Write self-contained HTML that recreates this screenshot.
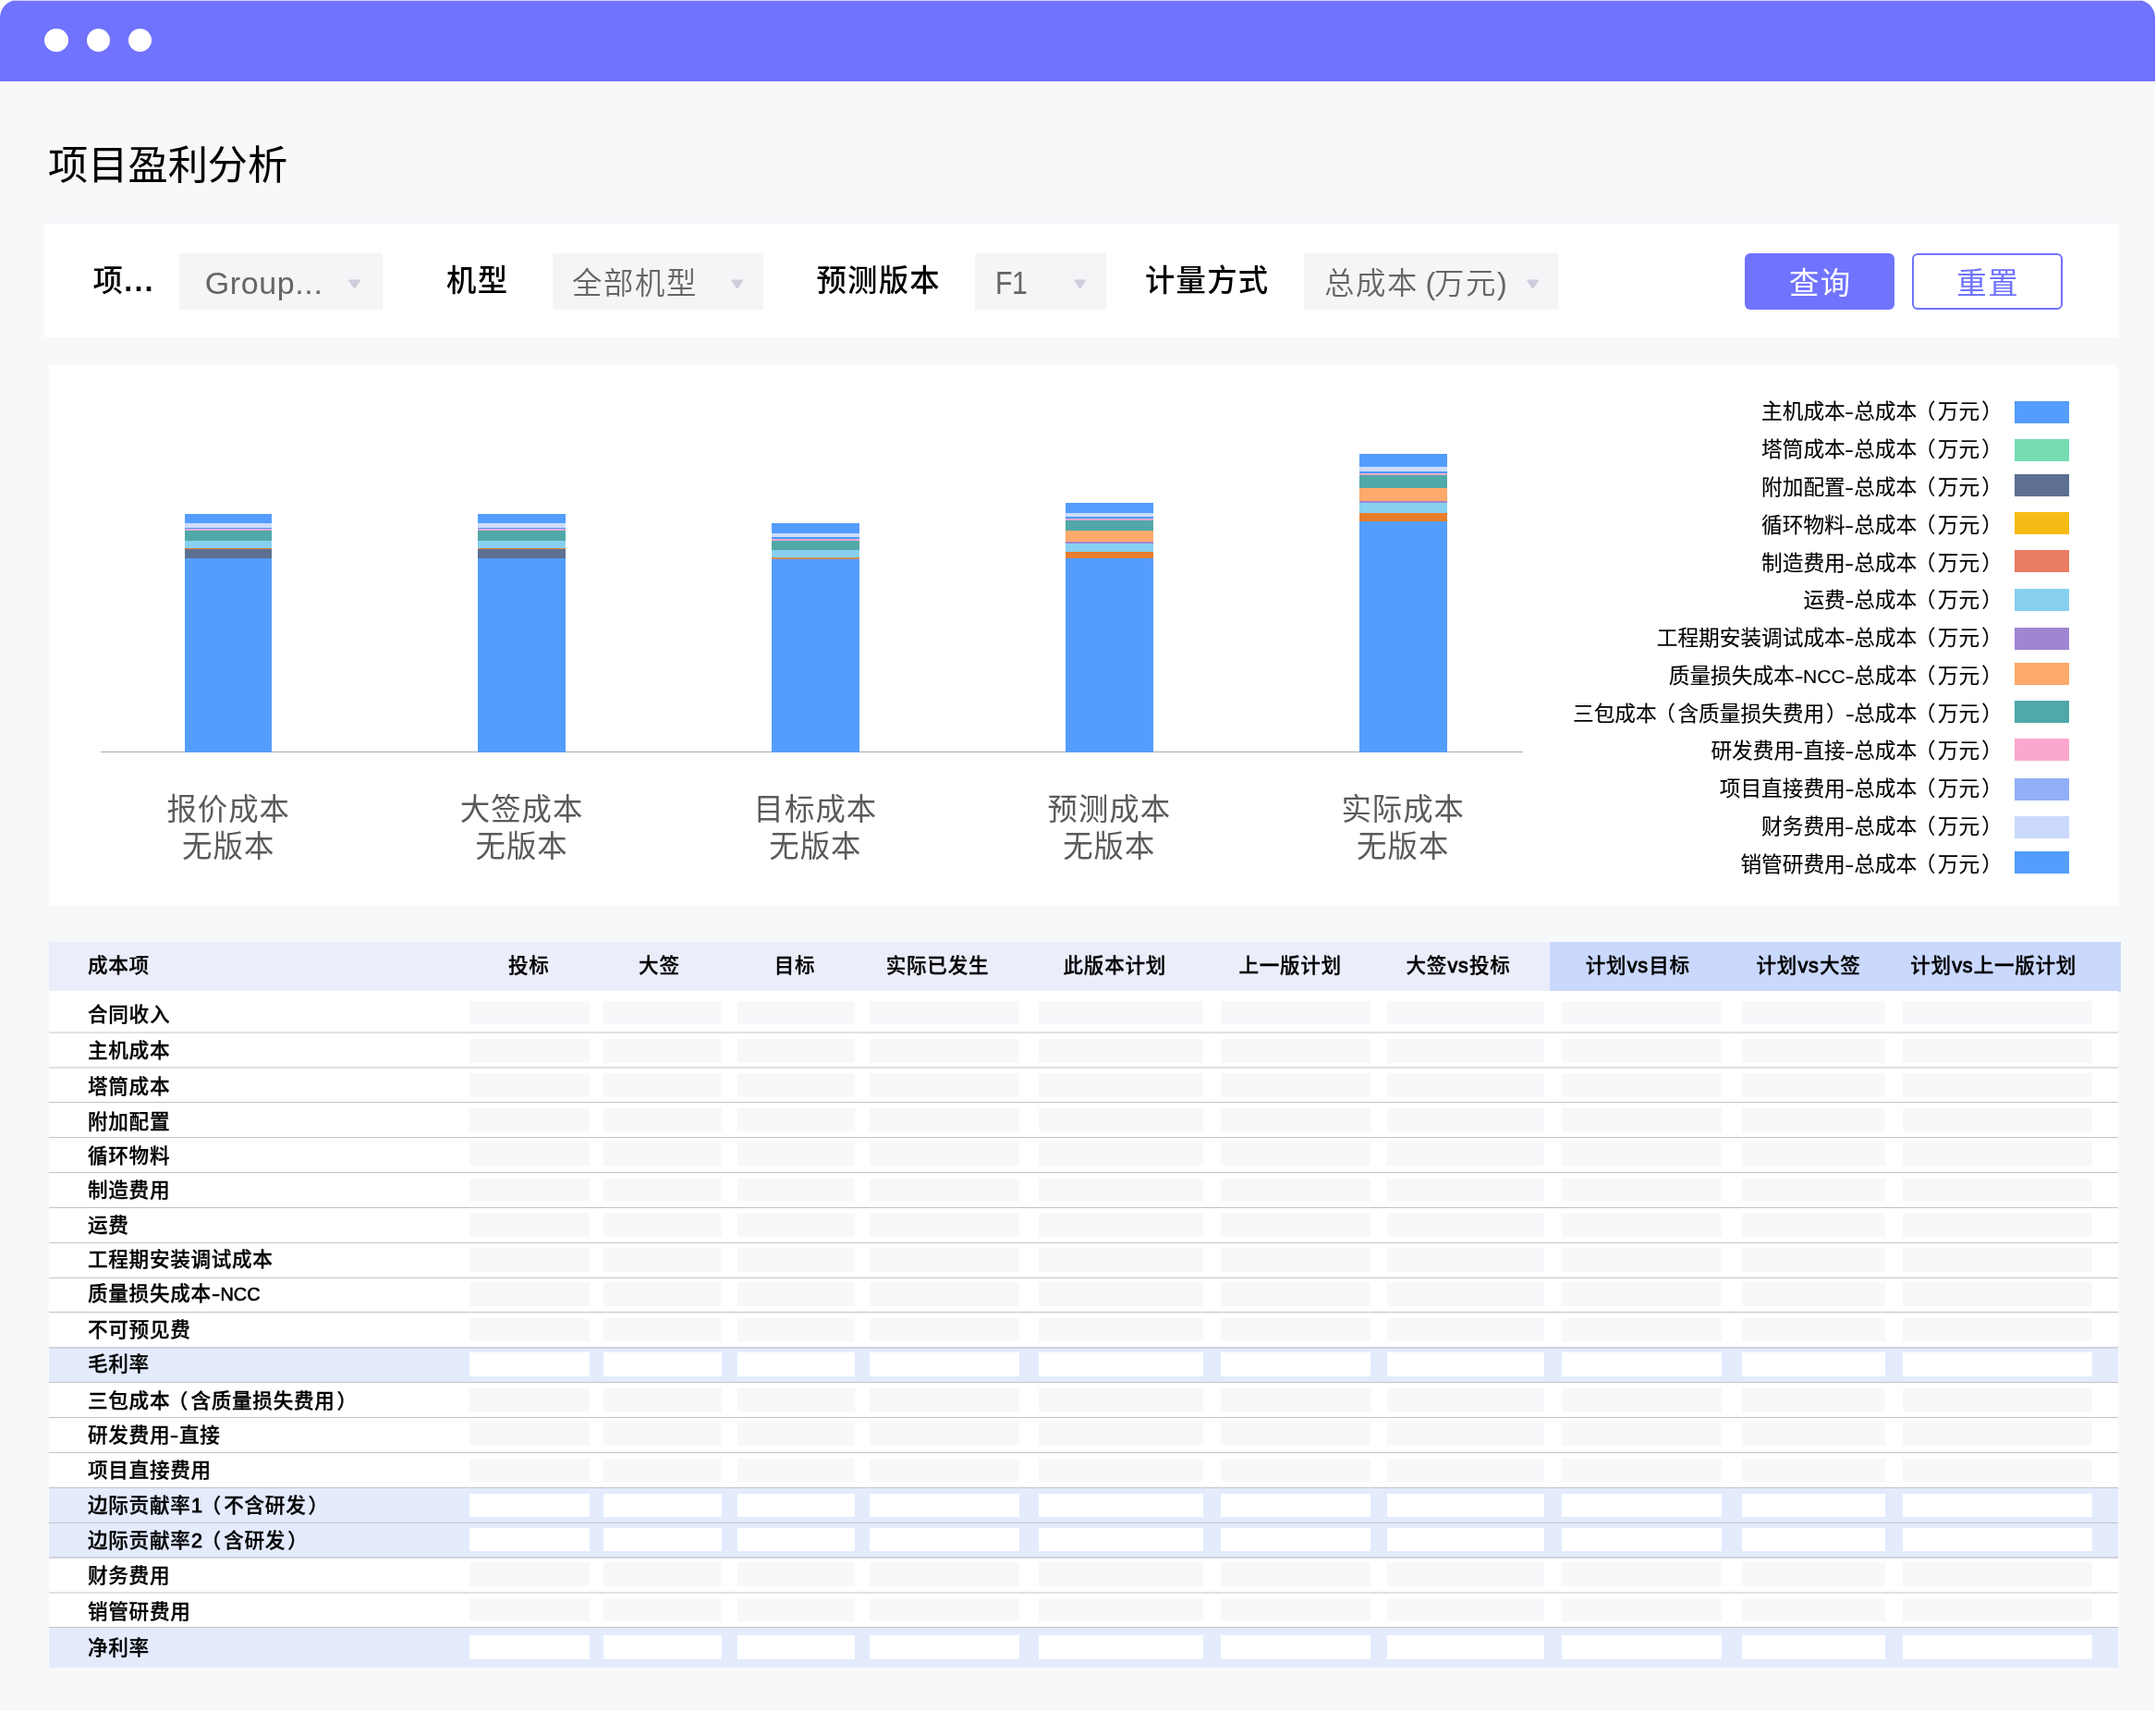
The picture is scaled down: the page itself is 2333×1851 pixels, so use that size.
<!DOCTYPE html>
<html lang="zh-CN"><head><meta charset="utf-8"><title>项目盈利分析</title>
<style>
html,body{margin:0;padding:0;background:#fff}
body{width:2333px;height:1851px;overflow:hidden;font-family:"Liberation Sans", "Noto Sans CJK SC", sans-serif}
.win{position:absolute;left:0;top:0;width:2332px;height:1851px;background:#f7f8fa;border-radius:19px 19px 0 0;overflow:hidden}
.win div,.win svg{position:absolute}
.hdr{left:0;top:0;width:2332px;height:87.8px;background:#7073fd}
.dot{width:25.1px;height:25.1px;border-radius:50%;background:#fff}
.tl{left:0;top:0;width:2332px;height:1851px;will-change:transform}
.t{white-space:nowrap}
.m{-webkit-text-stroke:0.3px #000}
.pl{position:relative;left:-2.4px}
.pr{position:relative;left:2px}
.h{display:inline-block;transform:scaleX(1.34);margin:0 0.9px}
.l{font-size:0.93em}
.g{-webkit-text-stroke:0.12px #000}
.m .l{font-size:1.0em;-webkit-text-stroke:0.9px #000;margin:0 0.4px}
.m .u{font-size:.92em;-webkit-text-stroke:0.6px #000;margin:0;letter-spacing:0}
.btn{box-sizing:border-box;border-radius:6px}
.b1{background:#7073fd;color:#fff}
.b2{background:#fff;border:2px solid #7073fd}
</style></head><body>
<div class="win">
<div class="hdr"></div>
<div style="left:0;top:0;width:2332px;height:1px;background:#fff;opacity:.7"></div>
<div class="dot" style="left:48.45px;top:30.60px"></div>
<div class="dot" style="left:93.65px;top:30.60px"></div>
<div class="dot" style="left:138.95px;top:30.60px"></div>
<div style="left:47.0px;top:243.2px;width:2245.0px;height:121.8px;background:#fff;"></div>
<div style="left:194.0px;top:274.4px;width:219.7px;height:60.8px;background:#f5f5f8;"></div>
<div style="left:598.0px;top:274.4px;width:228.2px;height:60.8px;background:#f5f5f8;"></div>
<div style="left:1055.0px;top:274.4px;width:141.7px;height:60.8px;background:#f5f5f8;"></div>
<div style="left:1411.0px;top:274.4px;width:274.6px;height:60.8px;background:#f5f5f8;"></div>
<svg class="a" style="left:376.9px;top:301.8px" width="13.4" height="10.4" viewBox="0 0 14 11"><path d="M1.2 0.6h11.6a0.9 0.9 0 0 1 0.75 1.4l-5.7 8.2a1 1 0 0 1-1.7 0L0.45 2A0.9 0.9 0 0 1 1.2 0.6z" fill="#cdcddc"/></svg>
<svg class="a" style="left:791.2px;top:301.8px" width="13.4" height="10.4" viewBox="0 0 14 11"><path d="M1.2 0.6h11.6a0.9 0.9 0 0 1 0.75 1.4l-5.7 8.2a1 1 0 0 1-1.7 0L0.45 2A0.9 0.9 0 0 1 1.2 0.6z" fill="#cdcddc"/></svg>
<svg class="a" style="left:1161.8px;top:301.8px" width="13.4" height="10.4" viewBox="0 0 14 11"><path d="M1.2 0.6h11.6a0.9 0.9 0 0 1 0.75 1.4l-5.7 8.2a1 1 0 0 1-1.7 0L0.45 2A0.9 0.9 0 0 1 1.2 0.6z" fill="#cdcddc"/></svg>
<svg class="a" style="left:1651.6px;top:301.8px" width="13.4" height="10.4" viewBox="0 0 14 11"><path d="M1.2 0.6h11.6a0.9 0.9 0 0 1 0.75 1.4l-5.7 8.2a1 1 0 0 1-1.7 0L0.45 2A0.9 0.9 0 0 1 1.2 0.6z" fill="#cdcddc"/></svg>
<div class="btn b1" style="left:1888.2px;top:274.4px;width:162.1px;height:60.8px"></div>
<div class="btn b2" style="left:2069px;top:274.4px;width:163.2px;height:60.8px"></div>
<div style="left:53.0px;top:395.0px;width:2239.0px;height:585.0px;background:#fff;"></div>
<div style="left:109.4px;top:813.0px;width:1538.9px;height:1.0px;background:#a9a9a9;"></div>
<div style="left:200px;top:556px;width:94px;height:258px;background:linear-gradient(180deg,#549dfd 0.00px 9.90px,#cddcfc 9.90px 14.90px,#4d9bfc 14.90px 16.00px,#fba7ce 16.00px 18.00px,#50a8a8 18.00px 28.70px,#87d0ef 28.70px 36.80px,#e67e2d 36.80px 38.20px,#5d7091 38.20px 48.20px,#549dfd 48.20px 258.00px)"></div>
<div style="left:517px;top:556px;width:95px;height:258px;background:linear-gradient(180deg,#549dfd 0.00px 9.90px,#cddcfc 9.90px 14.90px,#4d9bfc 14.90px 16.00px,#fba7ce 16.00px 18.00px,#50a8a8 18.00px 28.70px,#87d0ef 28.70px 36.80px,#e67e2d 36.80px 38.20px,#5d7091 38.20px 48.20px,#549dfd 48.20px 258.00px)"></div>
<div style="left:835px;top:566px;width:95px;height:248px;background:linear-gradient(180deg,#549dfd 0.00px 10.90px,#cddcfc 10.90px 15.00px,#4d9bfc 15.00px 16.75px,#fba7ce 16.75px 18.90px,#50a8a8 18.90px 29.00px,#87d0ef 29.00px 36.90px,#cf8a55 36.90px 38.70px,#549dfd 38.70px 248.00px)"></div>
<div style="left:1153px;top:544px;width:95px;height:270px;background:linear-gradient(180deg,#549dfd 0.00px 11.50px,#cddcfc 11.50px 15.25px,#4d9bfc 15.25px 17.00px,#fba7ce 17.00px 18.95px,#50a8a8 18.95px 30.30px,#fda96b 30.30px 42.00px,#a085d3 42.00px 43.80px,#87d0ef 43.80px 53.00px,#e67e2d 53.00px 60.40px,#549dfd 60.40px 270.00px)"></div>
<div style="left:1471px;top:491px;width:95px;height:323px;background:linear-gradient(180deg,#549dfd 0.00px 14.10px,#cddcfc 14.10px 19.00px,#4d9bfc 19.00px 21.05px,#fba7ce 21.05px 23.50px,#50a8a8 23.50px 37.00px,#fda96b 37.00px 51.00px,#a085d3 51.00px 52.90px,#87d0ef 52.90px 63.90px,#e67e2d 63.90px 72.90px,#549dfd 72.90px 323.00px)"></div>
<div style="left:2180.0px;top:434.1px;width:59.2px;height:23.8px;background:#549dfd;"></div>
<div style="left:2180.0px;top:475.0px;width:59.2px;height:23.8px;background:#76dcb1;"></div>
<div style="left:2180.0px;top:513.4px;width:59.2px;height:23.8px;background:#5d7091;"></div>
<div style="left:2180.0px;top:554.1px;width:59.2px;height:23.8px;background:#f6bc16;"></div>
<div style="left:2180.0px;top:595.1px;width:59.2px;height:23.8px;background:#eb7c64;"></div>
<div style="left:2180.0px;top:637.2px;width:59.2px;height:23.8px;background:#87d0ef;"></div>
<div style="left:2180.0px;top:679.4px;width:59.2px;height:23.8px;background:#a085d3;"></div>
<div style="left:2180.0px;top:717.4px;width:59.2px;height:23.8px;background:#fda96b;"></div>
<div style="left:2180.0px;top:758.3px;width:59.2px;height:23.8px;background:#50a8a8;"></div>
<div style="left:2180.0px;top:799.2px;width:59.2px;height:23.8px;background:#fba7ce;"></div>
<div style="left:2180.0px;top:842.3px;width:59.2px;height:23.8px;background:#91b0f8;"></div>
<div style="left:2180.0px;top:883.2px;width:59.2px;height:23.8px;background:#cbd9fd;"></div>
<div style="left:2180.0px;top:921.3px;width:59.2px;height:23.8px;background:#549dfd;"></div>
<div style="left:53.2px;top:1018.5px;width:2241.8px;height:54.0px;background:#ebedfa;"></div>
<div style="left:1676.6px;top:1018.5px;width:618.4px;height:54.0px;background:#c9d8fc;"></div>
<div style="left:53.2px;top:1072.0px;width:2238.8px;height:732.0px;background:#fff;"></div>
<div style="left:53.2px;top:1457.0px;width:2238.8px;height:38.0px;background:#e3ebfd;"></div>
<div style="left:53.2px;top:1609.0px;width:2238.8px;height:38.0px;background:#e3ebfd;"></div>
<div style="left:53.2px;top:1647.0px;width:2238.8px;height:37.0px;background:#e3ebfd;"></div>
<div style="left:53.2px;top:1760.0px;width:2238.8px;height:44.0px;background:#e3ebfd;"></div>
<div style="left:53.2px;top:1116.0px;width:2238.8px;height:2.0px;background:#e1e1e3;"></div>
<div style="left:53.2px;top:1154.0px;width:2238.8px;height:2.0px;background:#e1e1e3;"></div>
<div style="left:53.2px;top:1192.0px;width:2238.8px;height:1.0px;background:#c3c3c6;"></div>
<div style="left:53.2px;top:1230.0px;width:2238.8px;height:1.0px;background:#c3c3c6;"></div>
<div style="left:53.2px;top:1268.0px;width:2238.8px;height:1.0px;background:#c3c3c6;"></div>
<div style="left:53.2px;top:1306.0px;width:2238.8px;height:1.0px;background:#c3c3c6;"></div>
<div style="left:53.2px;top:1344.0px;width:2238.8px;height:1.0px;background:#c3c3c6;"></div>
<div style="left:53.2px;top:1382.0px;width:2238.8px;height:1.0px;background:#c3c3c6;"></div>
<div style="left:53.2px;top:1419.0px;width:2238.8px;height:1.0px;background:#c3c3c6;"></div>
<div style="left:53.2px;top:1457.0px;width:2238.8px;height:2.0px;background:#cfd3de;"></div>
<div style="left:53.2px;top:1495.0px;width:2238.8px;height:1.0px;background:#c3c3c6;"></div>
<div style="left:53.2px;top:1533.0px;width:2238.8px;height:1.0px;background:#c3c3c6;"></div>
<div style="left:53.2px;top:1571.0px;width:2238.8px;height:1.0px;background:#c3c3c6;"></div>
<div style="left:53.2px;top:1609.0px;width:2238.8px;height:1.0px;background:#c3c3c6;"></div>
<div style="left:53.2px;top:1647.0px;width:2238.8px;height:1.0px;background:#c3c3c6;"></div>
<div style="left:53.2px;top:1684.0px;width:2238.8px;height:2.0px;background:#cfd3de;"></div>
<div style="left:53.2px;top:1722.0px;width:2238.8px;height:2.0px;background:#e1e1e3;"></div>
<div style="left:53.2px;top:1760.0px;width:2238.8px;height:1.0px;background:#c3c3c6;"></div>
<div style="left:508.2px;top:1082.7px;width:129.6px;height:25.4px;background:#f7f8fa;"></div>
<div style="left:653.1px;top:1082.7px;width:127.7px;height:25.4px;background:#f7f8fa;"></div>
<div style="left:797.9px;top:1082.7px;width:127.2px;height:25.4px;background:#f7f8fa;"></div>
<div style="left:940.9px;top:1082.7px;width:161.7px;height:25.4px;background:#f7f8fa;"></div>
<div style="left:1124.3px;top:1082.7px;width:177.6px;height:25.4px;background:#f7f8fa;"></div>
<div style="left:1321.0px;top:1082.7px;width:161.7px;height:25.4px;background:#f7f8fa;"></div>
<div style="left:1500.8px;top:1082.7px;width:170.4px;height:25.4px;background:#f7f8fa;"></div>
<div style="left:1689.6px;top:1082.7px;width:173.6px;height:25.4px;background:#f7f8fa;"></div>
<div style="left:1884.6px;top:1082.7px;width:155.4px;height:25.4px;background:#f7f8fa;"></div>
<div style="left:2059.0px;top:1082.7px;width:204.6px;height:25.4px;background:#f7f8fa;"></div>
<div style="left:508.2px;top:1124.3px;width:129.6px;height:25.4px;background:#f7f8fa;"></div>
<div style="left:653.1px;top:1124.3px;width:127.7px;height:25.4px;background:#f7f8fa;"></div>
<div style="left:797.9px;top:1124.3px;width:127.2px;height:25.4px;background:#f7f8fa;"></div>
<div style="left:940.9px;top:1124.3px;width:161.7px;height:25.4px;background:#f7f8fa;"></div>
<div style="left:1124.3px;top:1124.3px;width:177.6px;height:25.4px;background:#f7f8fa;"></div>
<div style="left:1321.0px;top:1124.3px;width:161.7px;height:25.4px;background:#f7f8fa;"></div>
<div style="left:1500.8px;top:1124.3px;width:170.4px;height:25.4px;background:#f7f8fa;"></div>
<div style="left:1689.6px;top:1124.3px;width:173.6px;height:25.4px;background:#f7f8fa;"></div>
<div style="left:1884.6px;top:1124.3px;width:155.4px;height:25.4px;background:#f7f8fa;"></div>
<div style="left:2059.0px;top:1124.3px;width:204.6px;height:25.4px;background:#f7f8fa;"></div>
<div style="left:508.2px;top:1161.3px;width:129.6px;height:25.4px;background:#f7f8fa;"></div>
<div style="left:653.1px;top:1161.3px;width:127.7px;height:25.4px;background:#f7f8fa;"></div>
<div style="left:797.9px;top:1161.3px;width:127.2px;height:25.4px;background:#f7f8fa;"></div>
<div style="left:940.9px;top:1161.3px;width:161.7px;height:25.4px;background:#f7f8fa;"></div>
<div style="left:1124.3px;top:1161.3px;width:177.6px;height:25.4px;background:#f7f8fa;"></div>
<div style="left:1321.0px;top:1161.3px;width:161.7px;height:25.4px;background:#f7f8fa;"></div>
<div style="left:1500.8px;top:1161.3px;width:170.4px;height:25.4px;background:#f7f8fa;"></div>
<div style="left:1689.6px;top:1161.3px;width:173.6px;height:25.4px;background:#f7f8fa;"></div>
<div style="left:1884.6px;top:1161.3px;width:155.4px;height:25.4px;background:#f7f8fa;"></div>
<div style="left:2059.0px;top:1161.3px;width:204.6px;height:25.4px;background:#f7f8fa;"></div>
<div style="left:508.2px;top:1198.9px;width:129.6px;height:25.4px;background:#f7f8fa;"></div>
<div style="left:653.1px;top:1198.9px;width:127.7px;height:25.4px;background:#f7f8fa;"></div>
<div style="left:797.9px;top:1198.9px;width:127.2px;height:25.4px;background:#f7f8fa;"></div>
<div style="left:940.9px;top:1198.9px;width:161.7px;height:25.4px;background:#f7f8fa;"></div>
<div style="left:1124.3px;top:1198.9px;width:177.6px;height:25.4px;background:#f7f8fa;"></div>
<div style="left:1321.0px;top:1198.9px;width:161.7px;height:25.4px;background:#f7f8fa;"></div>
<div style="left:1500.8px;top:1198.9px;width:170.4px;height:25.4px;background:#f7f8fa;"></div>
<div style="left:1689.6px;top:1198.9px;width:173.6px;height:25.4px;background:#f7f8fa;"></div>
<div style="left:1884.6px;top:1198.9px;width:155.4px;height:25.4px;background:#f7f8fa;"></div>
<div style="left:2059.0px;top:1198.9px;width:204.6px;height:25.4px;background:#f7f8fa;"></div>
<div style="left:508.2px;top:1235.4px;width:129.6px;height:25.4px;background:#f7f8fa;"></div>
<div style="left:653.1px;top:1235.4px;width:127.7px;height:25.4px;background:#f7f8fa;"></div>
<div style="left:797.9px;top:1235.4px;width:127.2px;height:25.4px;background:#f7f8fa;"></div>
<div style="left:940.9px;top:1235.4px;width:161.7px;height:25.4px;background:#f7f8fa;"></div>
<div style="left:1124.3px;top:1235.4px;width:177.6px;height:25.4px;background:#f7f8fa;"></div>
<div style="left:1321.0px;top:1235.4px;width:161.7px;height:25.4px;background:#f7f8fa;"></div>
<div style="left:1500.8px;top:1235.4px;width:170.4px;height:25.4px;background:#f7f8fa;"></div>
<div style="left:1689.6px;top:1235.4px;width:173.6px;height:25.4px;background:#f7f8fa;"></div>
<div style="left:1884.6px;top:1235.4px;width:155.4px;height:25.4px;background:#f7f8fa;"></div>
<div style="left:2059.0px;top:1235.4px;width:204.6px;height:25.4px;background:#f7f8fa;"></div>
<div style="left:508.2px;top:1275.0px;width:129.6px;height:25.4px;background:#f7f8fa;"></div>
<div style="left:653.1px;top:1275.0px;width:127.7px;height:25.4px;background:#f7f8fa;"></div>
<div style="left:797.9px;top:1275.0px;width:127.2px;height:25.4px;background:#f7f8fa;"></div>
<div style="left:940.9px;top:1275.0px;width:161.7px;height:25.4px;background:#f7f8fa;"></div>
<div style="left:1124.3px;top:1275.0px;width:177.6px;height:25.4px;background:#f7f8fa;"></div>
<div style="left:1321.0px;top:1275.0px;width:161.7px;height:25.4px;background:#f7f8fa;"></div>
<div style="left:1500.8px;top:1275.0px;width:170.4px;height:25.4px;background:#f7f8fa;"></div>
<div style="left:1689.6px;top:1275.0px;width:173.6px;height:25.4px;background:#f7f8fa;"></div>
<div style="left:1884.6px;top:1275.0px;width:155.4px;height:25.4px;background:#f7f8fa;"></div>
<div style="left:2059.0px;top:1275.0px;width:204.6px;height:25.4px;background:#f7f8fa;"></div>
<div style="left:508.2px;top:1313.0px;width:129.6px;height:25.4px;background:#f7f8fa;"></div>
<div style="left:653.1px;top:1313.0px;width:127.7px;height:25.4px;background:#f7f8fa;"></div>
<div style="left:797.9px;top:1313.0px;width:127.2px;height:25.4px;background:#f7f8fa;"></div>
<div style="left:940.9px;top:1313.0px;width:161.7px;height:25.4px;background:#f7f8fa;"></div>
<div style="left:1124.3px;top:1313.0px;width:177.6px;height:25.4px;background:#f7f8fa;"></div>
<div style="left:1321.0px;top:1313.0px;width:161.7px;height:25.4px;background:#f7f8fa;"></div>
<div style="left:1500.8px;top:1313.0px;width:170.4px;height:25.4px;background:#f7f8fa;"></div>
<div style="left:1689.6px;top:1313.0px;width:173.6px;height:25.4px;background:#f7f8fa;"></div>
<div style="left:1884.6px;top:1313.0px;width:155.4px;height:25.4px;background:#f7f8fa;"></div>
<div style="left:2059.0px;top:1313.0px;width:204.6px;height:25.4px;background:#f7f8fa;"></div>
<div style="left:508.2px;top:1350.2px;width:129.6px;height:25.4px;background:#f7f8fa;"></div>
<div style="left:653.1px;top:1350.2px;width:127.7px;height:25.4px;background:#f7f8fa;"></div>
<div style="left:797.9px;top:1350.2px;width:127.2px;height:25.4px;background:#f7f8fa;"></div>
<div style="left:940.9px;top:1350.2px;width:161.7px;height:25.4px;background:#f7f8fa;"></div>
<div style="left:1124.3px;top:1350.2px;width:177.6px;height:25.4px;background:#f7f8fa;"></div>
<div style="left:1321.0px;top:1350.2px;width:161.7px;height:25.4px;background:#f7f8fa;"></div>
<div style="left:1500.8px;top:1350.2px;width:170.4px;height:25.4px;background:#f7f8fa;"></div>
<div style="left:1689.6px;top:1350.2px;width:173.6px;height:25.4px;background:#f7f8fa;"></div>
<div style="left:1884.6px;top:1350.2px;width:155.4px;height:25.4px;background:#f7f8fa;"></div>
<div style="left:2059.0px;top:1350.2px;width:204.6px;height:25.4px;background:#f7f8fa;"></div>
<div style="left:508.2px;top:1387.2px;width:129.6px;height:25.4px;background:#f7f8fa;"></div>
<div style="left:653.1px;top:1387.2px;width:127.7px;height:25.4px;background:#f7f8fa;"></div>
<div style="left:797.9px;top:1387.2px;width:127.2px;height:25.4px;background:#f7f8fa;"></div>
<div style="left:940.9px;top:1387.2px;width:161.7px;height:25.4px;background:#f7f8fa;"></div>
<div style="left:1124.3px;top:1387.2px;width:177.6px;height:25.4px;background:#f7f8fa;"></div>
<div style="left:1321.0px;top:1387.2px;width:161.7px;height:25.4px;background:#f7f8fa;"></div>
<div style="left:1500.8px;top:1387.2px;width:170.4px;height:25.4px;background:#f7f8fa;"></div>
<div style="left:1689.6px;top:1387.2px;width:173.6px;height:25.4px;background:#f7f8fa;"></div>
<div style="left:1884.6px;top:1387.2px;width:155.4px;height:25.4px;background:#f7f8fa;"></div>
<div style="left:2059.0px;top:1387.2px;width:204.6px;height:25.4px;background:#f7f8fa;"></div>
<div style="left:508.2px;top:1425.5px;width:129.6px;height:25.4px;background:#f7f8fa;"></div>
<div style="left:653.1px;top:1425.5px;width:127.7px;height:25.4px;background:#f7f8fa;"></div>
<div style="left:797.9px;top:1425.5px;width:127.2px;height:25.4px;background:#f7f8fa;"></div>
<div style="left:940.9px;top:1425.5px;width:161.7px;height:25.4px;background:#f7f8fa;"></div>
<div style="left:1124.3px;top:1425.5px;width:177.6px;height:25.4px;background:#f7f8fa;"></div>
<div style="left:1321.0px;top:1425.5px;width:161.7px;height:25.4px;background:#f7f8fa;"></div>
<div style="left:1500.8px;top:1425.5px;width:170.4px;height:25.4px;background:#f7f8fa;"></div>
<div style="left:1689.6px;top:1425.5px;width:173.6px;height:25.4px;background:#f7f8fa;"></div>
<div style="left:1884.6px;top:1425.5px;width:155.4px;height:25.4px;background:#f7f8fa;"></div>
<div style="left:2059.0px;top:1425.5px;width:204.6px;height:25.4px;background:#f7f8fa;"></div>
<div style="left:508.2px;top:1463.4px;width:129.6px;height:25.4px;background:#fff;"></div>
<div style="left:653.1px;top:1463.4px;width:127.7px;height:25.4px;background:#fff;"></div>
<div style="left:797.9px;top:1463.4px;width:127.2px;height:25.4px;background:#fff;"></div>
<div style="left:940.9px;top:1463.4px;width:161.7px;height:25.4px;background:#fff;"></div>
<div style="left:1124.3px;top:1463.4px;width:177.6px;height:25.4px;background:#fff;"></div>
<div style="left:1321.0px;top:1463.4px;width:161.7px;height:25.4px;background:#fff;"></div>
<div style="left:1500.8px;top:1463.4px;width:170.4px;height:25.4px;background:#fff;"></div>
<div style="left:1689.6px;top:1463.4px;width:173.6px;height:25.4px;background:#fff;"></div>
<div style="left:1884.6px;top:1463.4px;width:155.4px;height:25.4px;background:#fff;"></div>
<div style="left:2059.0px;top:1463.4px;width:204.6px;height:25.4px;background:#fff;"></div>
<div style="left:508.2px;top:1501.9px;width:129.6px;height:25.4px;background:#f7f8fa;"></div>
<div style="left:653.1px;top:1501.9px;width:127.7px;height:25.4px;background:#f7f8fa;"></div>
<div style="left:797.9px;top:1501.9px;width:127.2px;height:25.4px;background:#f7f8fa;"></div>
<div style="left:940.9px;top:1501.9px;width:161.7px;height:25.4px;background:#f7f8fa;"></div>
<div style="left:1124.3px;top:1501.9px;width:177.6px;height:25.4px;background:#f7f8fa;"></div>
<div style="left:1321.0px;top:1501.9px;width:161.7px;height:25.4px;background:#f7f8fa;"></div>
<div style="left:1500.8px;top:1501.9px;width:170.4px;height:25.4px;background:#f7f8fa;"></div>
<div style="left:1689.6px;top:1501.9px;width:173.6px;height:25.4px;background:#f7f8fa;"></div>
<div style="left:1884.6px;top:1501.9px;width:155.4px;height:25.4px;background:#f7f8fa;"></div>
<div style="left:2059.0px;top:1501.9px;width:204.6px;height:25.4px;background:#f7f8fa;"></div>
<div style="left:508.2px;top:1538.4px;width:129.6px;height:25.4px;background:#f7f8fa;"></div>
<div style="left:653.1px;top:1538.4px;width:127.7px;height:25.4px;background:#f7f8fa;"></div>
<div style="left:797.9px;top:1538.4px;width:127.2px;height:25.4px;background:#f7f8fa;"></div>
<div style="left:940.9px;top:1538.4px;width:161.7px;height:25.4px;background:#f7f8fa;"></div>
<div style="left:1124.3px;top:1538.4px;width:177.6px;height:25.4px;background:#f7f8fa;"></div>
<div style="left:1321.0px;top:1538.4px;width:161.7px;height:25.4px;background:#f7f8fa;"></div>
<div style="left:1500.8px;top:1538.4px;width:170.4px;height:25.4px;background:#f7f8fa;"></div>
<div style="left:1689.6px;top:1538.4px;width:173.6px;height:25.4px;background:#f7f8fa;"></div>
<div style="left:1884.6px;top:1538.4px;width:155.4px;height:25.4px;background:#f7f8fa;"></div>
<div style="left:2059.0px;top:1538.4px;width:204.6px;height:25.4px;background:#f7f8fa;"></div>
<div style="left:508.2px;top:1577.8px;width:129.6px;height:25.4px;background:#f7f8fa;"></div>
<div style="left:653.1px;top:1577.8px;width:127.7px;height:25.4px;background:#f7f8fa;"></div>
<div style="left:797.9px;top:1577.8px;width:127.2px;height:25.4px;background:#f7f8fa;"></div>
<div style="left:940.9px;top:1577.8px;width:161.7px;height:25.4px;background:#f7f8fa;"></div>
<div style="left:1124.3px;top:1577.8px;width:177.6px;height:25.4px;background:#f7f8fa;"></div>
<div style="left:1321.0px;top:1577.8px;width:161.7px;height:25.4px;background:#f7f8fa;"></div>
<div style="left:1500.8px;top:1577.8px;width:170.4px;height:25.4px;background:#f7f8fa;"></div>
<div style="left:1689.6px;top:1577.8px;width:173.6px;height:25.4px;background:#f7f8fa;"></div>
<div style="left:1884.6px;top:1577.8px;width:155.4px;height:25.4px;background:#f7f8fa;"></div>
<div style="left:2059.0px;top:1577.8px;width:204.6px;height:25.4px;background:#f7f8fa;"></div>
<div style="left:508.2px;top:1615.5px;width:129.6px;height:25.4px;background:#fff;"></div>
<div style="left:653.1px;top:1615.5px;width:127.7px;height:25.4px;background:#fff;"></div>
<div style="left:797.9px;top:1615.5px;width:127.2px;height:25.4px;background:#fff;"></div>
<div style="left:940.9px;top:1615.5px;width:161.7px;height:25.4px;background:#fff;"></div>
<div style="left:1124.3px;top:1615.5px;width:177.6px;height:25.4px;background:#fff;"></div>
<div style="left:1321.0px;top:1615.5px;width:161.7px;height:25.4px;background:#fff;"></div>
<div style="left:1500.8px;top:1615.5px;width:170.4px;height:25.4px;background:#fff;"></div>
<div style="left:1689.6px;top:1615.5px;width:173.6px;height:25.4px;background:#fff;"></div>
<div style="left:1884.6px;top:1615.5px;width:155.4px;height:25.4px;background:#fff;"></div>
<div style="left:2059.0px;top:1615.5px;width:204.6px;height:25.4px;background:#fff;"></div>
<div style="left:508.2px;top:1652.8px;width:129.6px;height:25.4px;background:#fff;"></div>
<div style="left:653.1px;top:1652.8px;width:127.7px;height:25.4px;background:#fff;"></div>
<div style="left:797.9px;top:1652.8px;width:127.2px;height:25.4px;background:#fff;"></div>
<div style="left:940.9px;top:1652.8px;width:161.7px;height:25.4px;background:#fff;"></div>
<div style="left:1124.3px;top:1652.8px;width:177.6px;height:25.4px;background:#fff;"></div>
<div style="left:1321.0px;top:1652.8px;width:161.7px;height:25.4px;background:#fff;"></div>
<div style="left:1500.8px;top:1652.8px;width:170.4px;height:25.4px;background:#fff;"></div>
<div style="left:1689.6px;top:1652.8px;width:173.6px;height:25.4px;background:#fff;"></div>
<div style="left:1884.6px;top:1652.8px;width:155.4px;height:25.4px;background:#fff;"></div>
<div style="left:2059.0px;top:1652.8px;width:204.6px;height:25.4px;background:#fff;"></div>
<div style="left:508.2px;top:1690.2px;width:129.6px;height:25.4px;background:#f7f8fa;"></div>
<div style="left:653.1px;top:1690.2px;width:127.7px;height:25.4px;background:#f7f8fa;"></div>
<div style="left:797.9px;top:1690.2px;width:127.2px;height:25.4px;background:#f7f8fa;"></div>
<div style="left:940.9px;top:1690.2px;width:161.7px;height:25.4px;background:#f7f8fa;"></div>
<div style="left:1124.3px;top:1690.2px;width:177.6px;height:25.4px;background:#f7f8fa;"></div>
<div style="left:1321.0px;top:1690.2px;width:161.7px;height:25.4px;background:#f7f8fa;"></div>
<div style="left:1500.8px;top:1690.2px;width:170.4px;height:25.4px;background:#f7f8fa;"></div>
<div style="left:1689.6px;top:1690.2px;width:173.6px;height:25.4px;background:#f7f8fa;"></div>
<div style="left:1884.6px;top:1690.2px;width:155.4px;height:25.4px;background:#f7f8fa;"></div>
<div style="left:2059.0px;top:1690.2px;width:204.6px;height:25.4px;background:#f7f8fa;"></div>
<div style="left:508.2px;top:1728.9px;width:129.6px;height:25.4px;background:#f7f8fa;"></div>
<div style="left:653.1px;top:1728.9px;width:127.7px;height:25.4px;background:#f7f8fa;"></div>
<div style="left:797.9px;top:1728.9px;width:127.2px;height:25.4px;background:#f7f8fa;"></div>
<div style="left:940.9px;top:1728.9px;width:161.7px;height:25.4px;background:#f7f8fa;"></div>
<div style="left:1124.3px;top:1728.9px;width:177.6px;height:25.4px;background:#f7f8fa;"></div>
<div style="left:1321.0px;top:1728.9px;width:161.7px;height:25.4px;background:#f7f8fa;"></div>
<div style="left:1500.8px;top:1728.9px;width:170.4px;height:25.4px;background:#f7f8fa;"></div>
<div style="left:1689.6px;top:1728.9px;width:173.6px;height:25.4px;background:#f7f8fa;"></div>
<div style="left:1884.6px;top:1728.9px;width:155.4px;height:25.4px;background:#f7f8fa;"></div>
<div style="left:2059.0px;top:1728.9px;width:204.6px;height:25.4px;background:#f7f8fa;"></div>
<div style="left:508.2px;top:1769.4px;width:129.6px;height:25.4px;background:#fff;"></div>
<div style="left:653.1px;top:1769.4px;width:127.7px;height:25.4px;background:#fff;"></div>
<div style="left:797.9px;top:1769.4px;width:127.2px;height:25.4px;background:#fff;"></div>
<div style="left:940.9px;top:1769.4px;width:161.7px;height:25.4px;background:#fff;"></div>
<div style="left:1124.3px;top:1769.4px;width:177.6px;height:25.4px;background:#fff;"></div>
<div style="left:1321.0px;top:1769.4px;width:161.7px;height:25.4px;background:#fff;"></div>
<div style="left:1500.8px;top:1769.4px;width:170.4px;height:25.4px;background:#fff;"></div>
<div style="left:1689.6px;top:1769.4px;width:173.6px;height:25.4px;background:#fff;"></div>
<div style="left:1884.6px;top:1769.4px;width:155.4px;height:25.4px;background:#fff;"></div>
<div style="left:2059.0px;top:1769.4px;width:204.6px;height:25.4px;background:#fff;"></div>
<div class="tl">
<div class="t g" style="top:147.1px;font-size:43.2px;line-height:65px;font-weight:400;color:#000;left:52.1px;">项目盈利分析</div>
<div class="t " style="top:280.1px;font-size:32.4px;line-height:49px;font-weight:500;color:#000;letter-spacing:1.2px;left:100.6px;">项<span style="letter-spacing:2.2px;font-weight:700">...</span></div>
<div class="t " style="top:281.9px;font-size:32.4px;line-height:49px;font-weight:350;color:#656565;letter-spacing:0.6px;left:221.8px;"><span style="font-size:34px">Group...</span></div>
<div class="t " style="top:280.1px;font-size:32.4px;line-height:49px;font-weight:500;color:#000;letter-spacing:1.2px;left:483.1px;">机型</div>
<div class="t " style="top:283.0px;font-size:32.4px;line-height:49px;font-weight:350;color:#656565;letter-spacing:1.6px;left:619.0px;">全部机型</div>
<div class="t " style="top:280.1px;font-size:32.4px;line-height:49px;font-weight:500;color:#000;letter-spacing:1.2px;left:883.5px;">预测版本</div>
<div class="t " style="top:281.5px;font-size:32.4px;line-height:49px;font-weight:350;color:#656565;letter-spacing:-0.6px;left:1077.4px;"><span style="font-size:34.5px;display:inline-block;transform:scaleX(.88);transform-origin:0 50%">F1</span></div>
<div class="t " style="top:280.1px;font-size:32.4px;line-height:49px;font-weight:500;color:#000;letter-spacing:1.2px;left:1239.0px;">计量方式</div>
<div class="t " style="top:283.0px;font-size:32.4px;line-height:49px;font-weight:350;color:#656565;letter-spacing:1.6px;left:1433.0px;">总成本<span style="letter-spacing:-1.4px"> (</span>万元)</div>
<div class="t " style="top:283.1px;font-size:32.4px;line-height:49px;font-weight:400;color:#fff;letter-spacing:1.5px;left:1969.8px;transform:translateX(-50%);">查询</div>
<div class="t " style="top:283.1px;font-size:32.4px;line-height:49px;font-weight:400;color:#7073fd;letter-spacing:1.5px;left:2151.2px;transform:translateX(-50%);">重置</div>
<div class="t " style="top:852.0px;font-size:32.4px;line-height:49px;font-weight:400;color:#5a5a5a;letter-spacing:1.0px;left:247.2px;transform:translateX(-50%);">报价成本</div>
<div class="t " style="top:892.0px;font-size:32.4px;line-height:49px;font-weight:400;color:#5a5a5a;letter-spacing:1.0px;left:247.2px;transform:translateX(-50%);">无版本</div>
<div class="t " style="top:852.0px;font-size:32.4px;line-height:49px;font-weight:400;color:#5a5a5a;letter-spacing:1.0px;left:564.6px;transform:translateX(-50%);">大签成本</div>
<div class="t " style="top:892.0px;font-size:32.4px;line-height:49px;font-weight:400;color:#5a5a5a;letter-spacing:1.0px;left:564.6px;transform:translateX(-50%);">无版本</div>
<div class="t " style="top:852.0px;font-size:32.4px;line-height:49px;font-weight:400;color:#5a5a5a;letter-spacing:1.0px;left:882.4px;transform:translateX(-50%);">目标成本</div>
<div class="t " style="top:892.0px;font-size:32.4px;line-height:49px;font-weight:400;color:#5a5a5a;letter-spacing:1.0px;left:882.4px;transform:translateX(-50%);">无版本</div>
<div class="t " style="top:852.0px;font-size:32.4px;line-height:49px;font-weight:400;color:#5a5a5a;letter-spacing:1.0px;left:1200.3px;transform:translateX(-50%);">预测成本</div>
<div class="t " style="top:892.0px;font-size:32.4px;line-height:49px;font-weight:400;color:#5a5a5a;letter-spacing:1.0px;left:1200.3px;transform:translateX(-50%);">无版本</div>
<div class="t " style="top:852.0px;font-size:32.4px;line-height:49px;font-weight:400;color:#5a5a5a;letter-spacing:1.0px;left:1518.2px;transform:translateX(-50%);">实际成本</div>
<div class="t " style="top:892.0px;font-size:32.4px;line-height:49px;font-weight:400;color:#5a5a5a;letter-spacing:1.0px;left:1518.2px;transform:translateX(-50%);">无版本</div>
<div class="t g" style="top:428.4px;font-size:22.68px;line-height:34px;font-weight:400;color:#000;left:2164.9px;transform:translateX(-100%);">主机成本<span class="h">-</span>总成本<span class="pl">（</span>万元<span class="pr">）</span></div>
<div class="t g" style="top:469.2px;font-size:22.68px;line-height:34px;font-weight:400;color:#000;left:2164.9px;transform:translateX(-100%);">塔筒成本<span class="h">-</span>总成本<span class="pl">（</span>万元<span class="pr">）</span></div>
<div class="t g" style="top:510.0px;font-size:22.68px;line-height:34px;font-weight:400;color:#000;left:2164.9px;transform:translateX(-100%);">附加配置<span class="h">-</span>总成本<span class="pl">（</span>万元<span class="pr">）</span></div>
<div class="t g" style="top:550.7px;font-size:22.68px;line-height:34px;font-weight:400;color:#000;left:2164.9px;transform:translateX(-100%);">循环物料<span class="h">-</span>总成本<span class="pl">（</span>万元<span class="pr">）</span></div>
<div class="t g" style="top:591.5px;font-size:22.68px;line-height:34px;font-weight:400;color:#000;left:2164.9px;transform:translateX(-100%);">制造费用<span class="h">-</span>总成本<span class="pl">（</span>万元<span class="pr">）</span></div>
<div class="t g" style="top:632.3px;font-size:22.68px;line-height:34px;font-weight:400;color:#000;left:2164.9px;transform:translateX(-100%);">运费<span class="h">-</span>总成本<span class="pl">（</span>万元<span class="pr">）</span></div>
<div class="t g" style="top:673.1px;font-size:22.68px;line-height:34px;font-weight:400;color:#000;left:2164.9px;transform:translateX(-100%);">工程期安装调试成本<span class="h">-</span>总成本<span class="pl">（</span>万元<span class="pr">）</span></div>
<div class="t g" style="top:713.9px;font-size:22.68px;line-height:34px;font-weight:400;color:#000;left:2164.9px;transform:translateX(-100%);">质量损失成本<span class="h">-</span><span class="l u">NCC</span><span class="h">-</span>总成本<span class="pl">（</span>万元<span class="pr">）</span></div>
<div class="t g" style="top:754.6px;font-size:22.68px;line-height:34px;font-weight:400;color:#000;left:2164.9px;transform:translateX(-100%);">三包成本<span class="pl">（</span>含质量损失费用<span class="pr">）</span><span class="h">-</span>总成本<span class="pl">（</span>万元<span class="pr">）</span></div>
<div class="t g" style="top:795.4px;font-size:22.68px;line-height:34px;font-weight:400;color:#000;left:2164.9px;transform:translateX(-100%);">研发费用<span class="h">-</span>直接<span class="h">-</span>总成本<span class="pl">（</span>万元<span class="pr">）</span></div>
<div class="t g" style="top:836.2px;font-size:22.68px;line-height:34px;font-weight:400;color:#000;left:2164.9px;transform:translateX(-100%);">项目直接费用<span class="h">-</span>总成本<span class="pl">（</span>万元<span class="pr">）</span></div>
<div class="t g" style="top:877.0px;font-size:22.68px;line-height:34px;font-weight:400;color:#000;left:2164.9px;transform:translateX(-100%);">财务费用<span class="h">-</span>总成本<span class="pl">（</span>万元<span class="pr">）</span></div>
<div class="t g" style="top:917.8px;font-size:22.68px;line-height:34px;font-weight:400;color:#000;left:2164.9px;transform:translateX(-100%);">销管研费用<span class="h">-</span>总成本<span class="pl">（</span>万元<span class="pr">）</span></div>
<div class="t m" style="top:1029.0px;font-size:21.6px;line-height:32px;font-weight:500;color:#000;letter-spacing:0.7px;left:95.0px;">成本项</div>
<div class="t m" style="top:1029.0px;font-size:21.6px;line-height:32px;font-weight:500;color:#000;letter-spacing:0.7px;left:572.2px;transform:translateX(-50%);">投标</div>
<div class="t m" style="top:1029.0px;font-size:21.6px;line-height:32px;font-weight:500;color:#000;letter-spacing:0.7px;left:713.4px;transform:translateX(-50%);">大签</div>
<div class="t m" style="top:1029.0px;font-size:21.6px;line-height:32px;font-weight:500;color:#000;letter-spacing:0.7px;left:860.0px;transform:translateX(-50%);">目标</div>
<div class="t m" style="top:1029.0px;font-size:21.6px;line-height:32px;font-weight:500;color:#000;letter-spacing:0.7px;left:1014.5px;transform:translateX(-50%);">实际已发生</div>
<div class="t m" style="top:1029.0px;font-size:21.6px;line-height:32px;font-weight:500;color:#000;letter-spacing:0.7px;left:1206.3px;transform:translateX(-50%);">此版本计划</div>
<div class="t m" style="top:1029.0px;font-size:21.6px;line-height:32px;font-weight:500;color:#000;letter-spacing:0.7px;left:1396.2px;transform:translateX(-50%);">上一版计划</div>
<div class="t m" style="top:1029.0px;font-size:21.6px;line-height:32px;font-weight:500;color:#000;letter-spacing:0.7px;left:1578.0px;transform:translateX(-50%);">大签<span class="l">vs</span>投标</div>
<div class="t m" style="top:1029.0px;font-size:21.6px;line-height:32px;font-weight:500;color:#000;letter-spacing:0.7px;left:1772.3px;transform:translateX(-50%);">计划<span class="l">vs</span>目标</div>
<div class="t m" style="top:1029.0px;font-size:21.6px;line-height:32px;font-weight:500;color:#000;letter-spacing:0.7px;left:1957.0px;transform:translateX(-50%);">计划<span class="l">vs</span>大签</div>
<div class="t m" style="top:1029.0px;font-size:21.6px;line-height:32px;font-weight:500;color:#000;letter-spacing:0.7px;left:2157.2px;transform:translateX(-50%);">计划<span class="l">vs</span>上一版计划</div>
<div class="t m" style="top:1081.9px;font-size:21.6px;line-height:32px;font-weight:500;color:#000;letter-spacing:0.7px;left:95.0px;">合同收入</div>
<div class="t m" style="top:1121.2px;font-size:21.6px;line-height:32px;font-weight:500;color:#000;letter-spacing:0.7px;left:95.0px;">主机成本</div>
<div class="t m" style="top:1160.0px;font-size:21.6px;line-height:32px;font-weight:500;color:#000;letter-spacing:0.7px;left:95.0px;">塔筒成本</div>
<div class="t m" style="top:1197.7px;font-size:21.6px;line-height:32px;font-weight:500;color:#000;letter-spacing:0.7px;left:95.0px;">附加配置</div>
<div class="t m" style="top:1234.7px;font-size:21.6px;line-height:32px;font-weight:500;color:#000;letter-spacing:0.7px;left:95.0px;">循环物料</div>
<div class="t m" style="top:1271.7px;font-size:21.6px;line-height:32px;font-weight:500;color:#000;letter-spacing:0.7px;left:95.0px;">制造费用</div>
<div class="t m" style="top:1310.2px;font-size:21.6px;line-height:32px;font-weight:500;color:#000;letter-spacing:0.7px;left:95.0px;">运费</div>
<div class="t m" style="top:1347.2px;font-size:21.6px;line-height:32px;font-weight:500;color:#000;letter-spacing:0.7px;left:95.0px;">工程期安装调试成本</div>
<div class="t m" style="top:1384.2px;font-size:21.6px;line-height:32px;font-weight:500;color:#000;letter-spacing:0.7px;left:95.0px;">质量损失成本<span class="h">-</span><span class="l u">NCC</span></div>
<div class="t m" style="top:1423.0px;font-size:21.6px;line-height:32px;font-weight:500;color:#000;letter-spacing:0.7px;left:95.0px;">不可预见费</div>
<div class="t m" style="top:1460.3px;font-size:21.6px;line-height:32px;font-weight:500;color:#000;letter-spacing:0.7px;left:95.0px;">毛利率</div>
<div class="t m" style="top:1500.4px;font-size:21.6px;line-height:32px;font-weight:500;color:#000;letter-spacing:0.7px;left:95.0px;">三包成本<span class="pl">（</span>含质量损失费用<span class="pr">）</span></div>
<div class="t m" style="top:1537.4px;font-size:21.6px;line-height:32px;font-weight:500;color:#000;letter-spacing:0.7px;left:95.0px;">研发费用<span class="h">-</span>直接</div>
<div class="t m" style="top:1575.0px;font-size:21.6px;line-height:32px;font-weight:500;color:#000;letter-spacing:0.7px;left:95.0px;">项目直接费用</div>
<div class="t m" style="top:1613.4px;font-size:21.6px;line-height:32px;font-weight:500;color:#000;letter-spacing:0.7px;left:95.0px;">边际贡献率<span class="l">1</span><span class="pl">（</span>不含研发<span class="pr">）</span></div>
<div class="t m" style="top:1650.7px;font-size:21.6px;line-height:32px;font-weight:500;color:#000;letter-spacing:0.7px;left:95.0px;">边际贡献率<span class="l">2</span><span class="pl">（</span>含研发<span class="pr">）</span></div>
<div class="t m" style="top:1689.1px;font-size:21.6px;line-height:32px;font-weight:500;color:#000;letter-spacing:0.7px;left:95.0px;">财务费用</div>
<div class="t m" style="top:1728.0px;font-size:21.6px;line-height:32px;font-weight:500;color:#000;letter-spacing:0.7px;left:95.0px;">销管研费用</div>
<div class="t m" style="top:1767.0px;font-size:21.6px;line-height:32px;font-weight:500;color:#000;letter-spacing:0.7px;left:95.0px;">净利率</div>
</div>
</div>
</body></html>
